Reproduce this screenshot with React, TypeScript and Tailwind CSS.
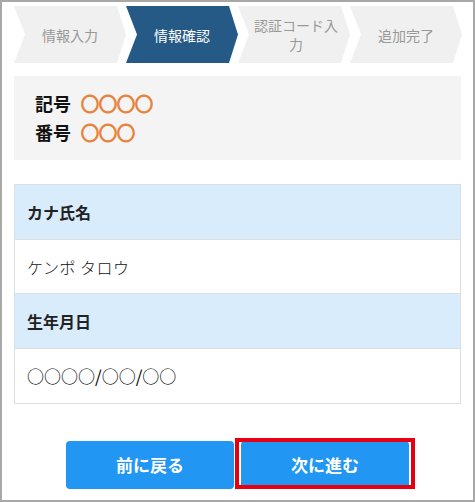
import React from "react";

const font = { fontFamily: '"Noto Sans CJK JP", "Noto Sans", sans-serif' };

function Step({ label, active, twoLine }: { label: React.ReactNode; active?: boolean; twoLine?: boolean }) {
  return (
    <div
      className={`w-[112px] h-[57px] shrink-0 flex items-center justify-center text-center text-[14px] [clip-path:polygon(0_0,calc(100%-9px)_0,100%_50%,calc(100%-9px)_100%,0_100%,11px_50%)] ${
        active ? "bg-[#255a87] text-white" : "bg-[#f0f0f0] text-[#999999]"
      } ${twoLine ? "leading-[19px] pl-[12px] pr-[8px]" : "leading-[20px]"}`}
    >
      {label}
    </div>
  );
}

export default function App() {
  return (
    <div style={font} className="w-[475px] h-[502px] border-2 border-[#a8a8a8] bg-white px-[12px] pt-[4px] box-border">
      <div className="flex">
        <Step label="情報入力" />
        <Step label="情報確認" active />
        <Step label={<span>認証コード入<br />力</span>} twoLine />
        <Step label="追加完了" />
      </div>

      <div className="mt-[13px] bg-[#f4f4f4] h-[84px] pt-[13px] pl-[21px] text-[18px] leading-[29px] font-bold text-[#111]">
        <div className="flex items-center">
          <span>記号</span>
          <span className="ml-[10px] text-[#e8823a] font-bold [-webkit-text-stroke:1.3px_#e8823a]">○○○○</span>
        </div>
        <div className="flex items-center">
          <span>番号</span>
          <span className="ml-[10px] text-[#e8823a] font-bold [-webkit-text-stroke:1.3px_#e8823a]">○○○</span>
        </div>
      </div>

      <div className="mt-[24px] border border-[#dedede] text-[16px] text-[#111]">
        <div className="h-[55px] flex items-center px-3 bg-[#d9ecfc] font-bold border-b border-[#dedede] text-[#222]">カナ氏名</div>
        <div className="h-[54px] flex items-center px-3 bg-white border-b border-[#dedede] font-light tracking-[0.5px]">ケンポ タロウ</div>
        <div className="h-[55px] flex items-center px-3 bg-[#d9ecfc] font-bold border-b border-[#dedede] text-[#222]">生年月日</div>
        <div className="h-[54px] flex items-center px-3 bg-white text-[17px] text-black">○○○○/○○/○○</div>
      </div>

      <div className="mt-[37px] flex justify-center gap-[7px]">
        <button className="w-[168px] h-[48px] rounded-[4px] bg-[#2196f3] text-white font-bold text-[17px]">前に戻る</button>
        <div className="relative">
          <button className="w-[168px] h-[48px] rounded-[4px] bg-[#2196f3] text-white font-bold text-[17px]">次に進む</button>
          <div className="absolute top-[-3px] bottom-0 left-[-6px] right-[-6px] border-4 border-[#e60012] pointer-events-none" />
        </div>
      </div>
    </div>
  );
}
